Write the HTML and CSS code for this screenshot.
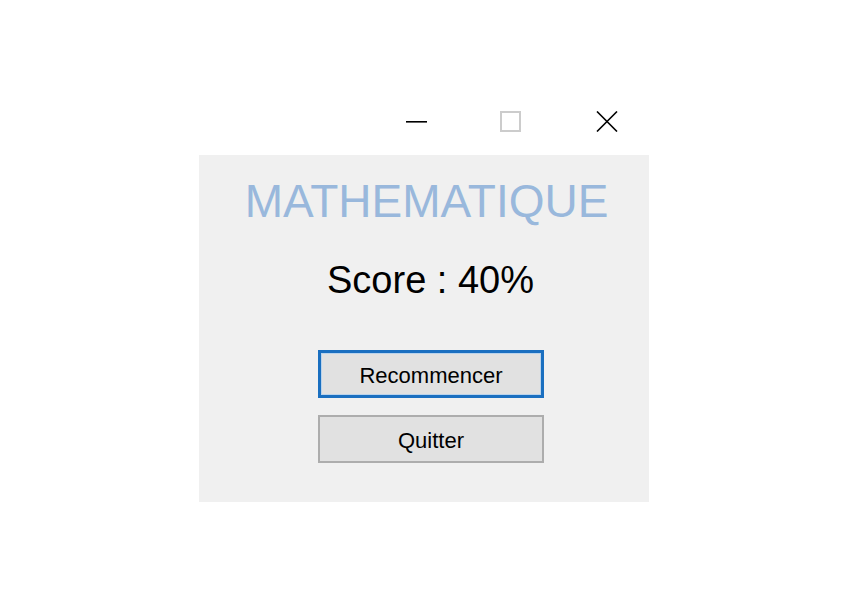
FILE: index.html
```html
<!DOCTYPE html>
<html lang="fr">
<head>
<meta charset="utf-8">
<title>MATHEMATIQUE</title>
<link rel="stylesheet" href="styles.css">
</head>
<body>
<div class="window">
  <div class="caption">
    <span class="cap-btn cap-min"><svg width="21" height="21" viewBox="0 0 21 21"><rect x="0" y="10" width="21" height="1.6" fill="#000"/></svg></span>
    <span class="cap-btn cap-max"><svg width="21" height="21" viewBox="0 0 21 21"><rect x="1" y="1" width="19" height="19" fill="none" stroke="#cccccc" stroke-width="2"/></svg></span>
    <span class="cap-btn cap-close"><svg width="22" height="21" viewBox="0 0 22 21"><path d="M1 0.5 L21 20.5 M21 0.5 L1 20.5" stroke="#000" stroke-width="1.6" fill="none"/></svg></span>
  </div>
  <div class="panel">
    <div class="title">MATHEMATIQUE</div>
    <div class="score">Score : 40%</div>
    <div class="actions">
      <button class="btn btn-focus" type="button">Recommencer</button>
      <button class="btn" type="button">Quitter</button>
    </div>
  </div>
</div>
</body>
</html>
```
FILE: styles.css
```css
html, body {
  margin: 0;
  padding: 0;
  background: #ffffff;
}
body {
  font-family: "Liberation Sans", Arial, sans-serif;
  width: 842px;
  height: 595px;
  overflow: hidden;
}
.window {
  padding-top: 100px;
  padding-left: 199px;
  width: 450px;
}
.caption {
  height: 55px;
  box-sizing: border-box;
  padding-top: 11px;
  padding-left: 207px;
  display: flex;
  align-items: flex-start;
}
.cap-btn {
  display: flex;
  height: 21px;
}
.cap-btn svg { display: block; }
.cap-min { width: 21px; margin-right: 73px; }
.cap-max { width: 21px; margin-right: 75px; }
.cap-close { width: 22px; }
.panel {
  width: 450px;
  height: 347px;
  box-sizing: border-box;
  background: #f0f0f0;
  padding-top: 23px;
  padding-left: 14px;
  display: flex;
  flex-direction: column;
  align-items: center;
}
.title {
  font-size: 46px;
  line-height: 46px;
  color: #99b8dc;
  margin-right: 9px;
  white-space: nowrap;
}
.score {
  margin-top: 37px;
  font-size: 38px;
  line-height: 38px;
  color: #000;
  margin-right: 1px;
  white-space: nowrap;
}
.actions {
  margin-top: 51px;
  display: flex;
  flex-direction: column;
  gap: 17px;
}
.btn {
  width: 226px;
  height: 48px;
  box-sizing: border-box;
  margin: 0;
  padding: 3px 0 0 0;
  background: #e1e1e1;
  border: 2px solid #adadad;
  font-family: "Liberation Sans", Arial, sans-serif;
  font-size: 22px;
  line-height: 22px;
  color: #000;
  display: flex;
  align-items: center;
  justify-content: center;
}
.btn-focus {
  border: 3px solid #1a6fc0;
  box-shadow: inset 0 0 0 1px #b9d3ec;
}
```
